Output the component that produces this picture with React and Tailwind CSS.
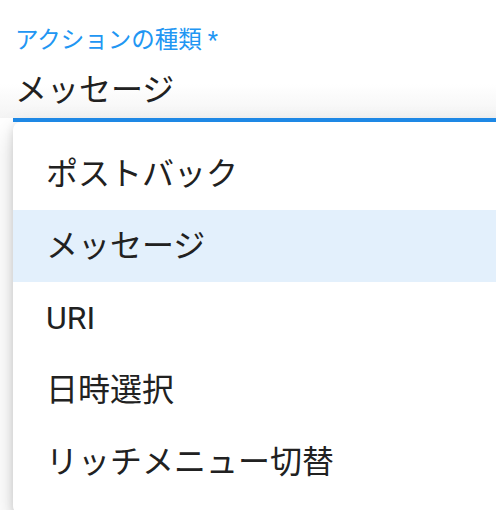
const options = ["ポストバック", "メッセージ", "URI", "日時選択", "リッチメニュー切替"];

const font = { fontFamily: "Roboto, 'Noto Sans CJK JP', sans-serif" };

export default function App() {
    return (
        <div className="relative w-[496px] h-[510px] overflow-hidden bg-white" style={font}>
            {/* shade cast by the open menu onto the field */}
            <div className="absolute left-0 right-0 top-[84px] h-[34px] bg-gradient-to-b from-white to-[#f4f4f4]"></div>

            <div className="relative pl-[13px] pt-[24px]">
                <div className="pl-[2px] text-[23.5px] leading-[32px] text-[#2196f3]">
                    アクションの種類 *
                </div>
                <div className="pl-[2px] mt-[12px] text-[32px] leading-[44px] text-[#212121]">
                    メッセージ
                </div>
                <div className="relative z-20 mt-[6px] h-[4px] bg-[#1e88e5]"></div>
            </div>

            <div className="absolute left-[13px] top-[122px] w-[520px] z-10 bg-white rounded-[8px] py-[16px] shadow-[0_10px_26px_rgba(0,0,0,0.18),0_2px_8px_rgba(0,0,0,0.12)]">
                {options.map((opt) => (
                    <div
                        key={opt}
                        className={`h-[72px] flex items-center px-[33px] text-[32px] text-[#212121] ${
                            opt === "メッセージ" ? "bg-[#e3f0fc]" : ""
                        }`}
                    >
                        {opt}
                    </div>
                ))}
            </div>
        </div>
    );
}
